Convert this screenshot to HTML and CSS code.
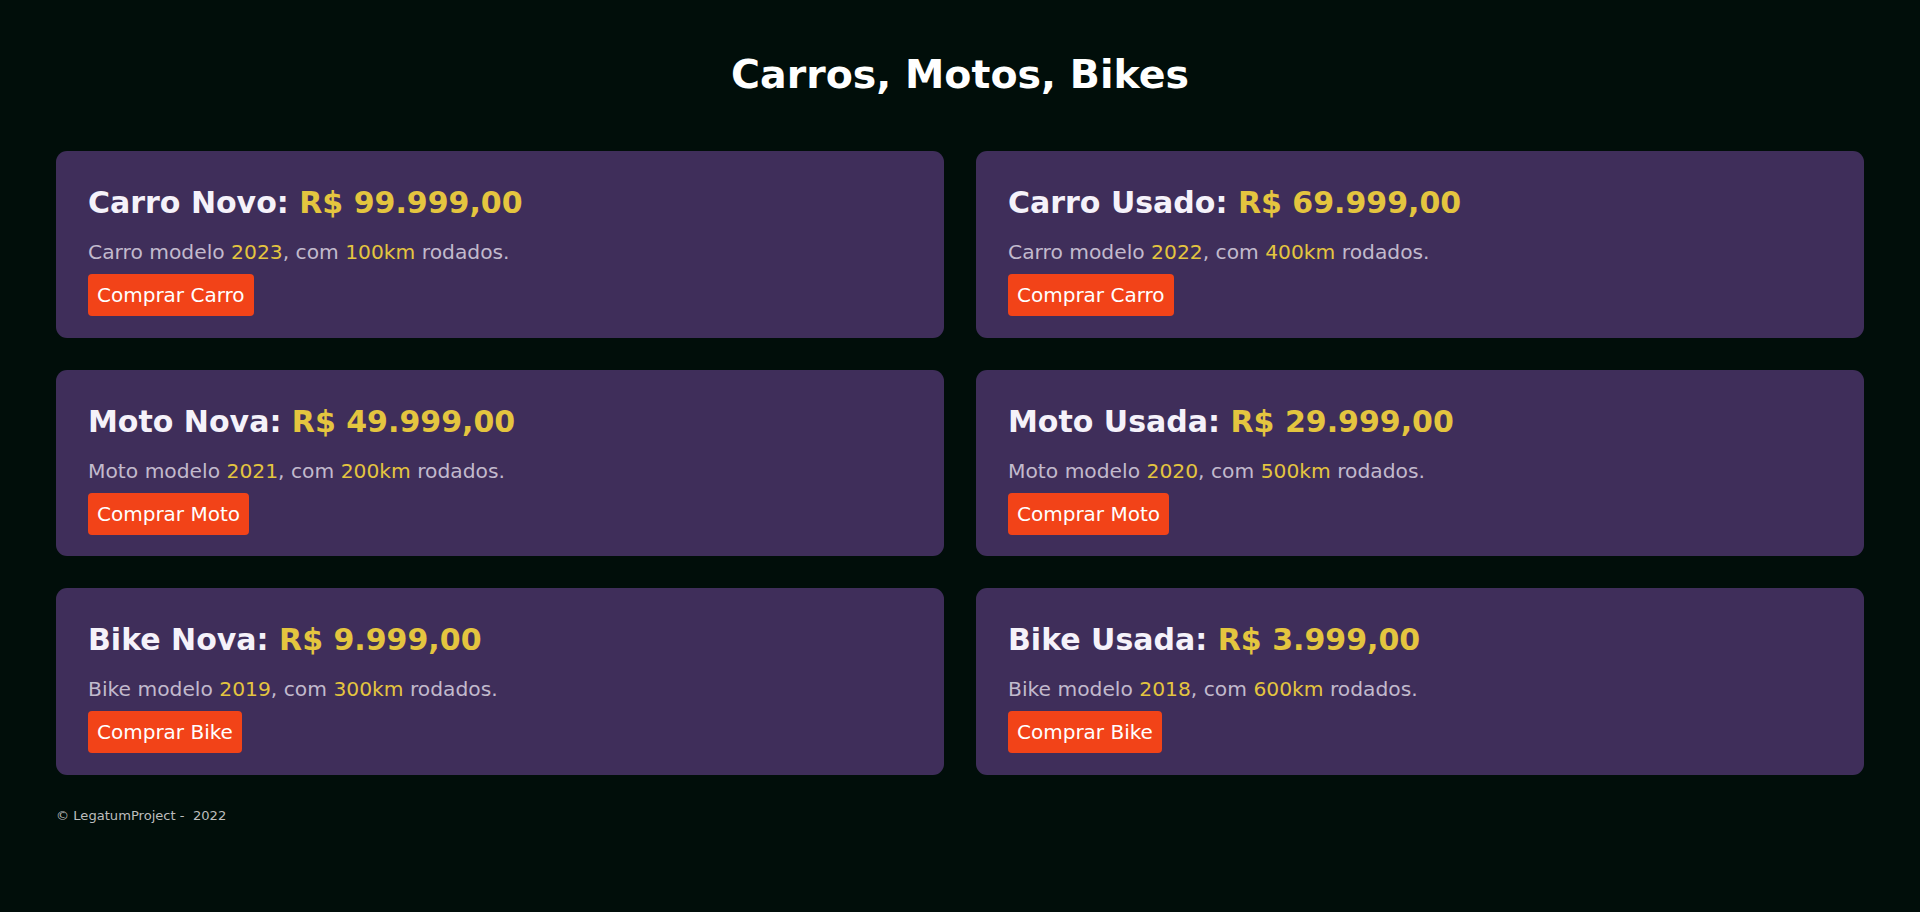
FILE: index.html
```html
<!DOCTYPE html>
<html lang="pt-BR">
<head>
<meta charset="utf-8">
<title>Carros, Motos, Bikes</title>
<link rel="stylesheet" href="styles.css">
</head>
<body>
<h1 class="page-title">Carros, Motos, Bikes</h1>
<main class="grid">
  <section class="card">
    <h2 class="card-title">Carro Novo: <span class="hl">R$ 99.999,00</span></h2>
    <p class="card-text">Carro modelo <span class="hl">2023</span>, com <span class="hl">100km</span> rodados.</p>
    <button class="buy">Comprar Carro</button>
  </section>
  <section class="card">
    <h2 class="card-title">Carro Usado: <span class="hl">R$ 69.999,00</span></h2>
    <p class="card-text">Carro modelo <span class="hl">2022</span>, com <span class="hl">400km</span> rodados.</p>
    <button class="buy">Comprar Carro</button>
  </section>
  <section class="card">
    <h2 class="card-title">Moto Nova: <span class="hl">R$ 49.999,00</span></h2>
    <p class="card-text">Moto modelo <span class="hl">2021</span>, com <span class="hl">200km</span> rodados.</p>
    <button class="buy">Comprar Moto</button>
  </section>
  <section class="card">
    <h2 class="card-title">Moto Usada: <span class="hl">R$ 29.999,00</span></h2>
    <p class="card-text">Moto modelo <span class="hl">2020</span>, com <span class="hl">500km</span> rodados.</p>
    <button class="buy">Comprar Moto</button>
  </section>
  <section class="card">
    <h2 class="card-title">Bike Nova: <span class="hl">R$ 9.999,00</span></h2>
    <p class="card-text">Bike modelo <span class="hl">2019</span>, com <span class="hl">300km</span> rodados.</p>
    <button class="buy">Comprar Bike</button>
  </section>
  <section class="card">
    <h2 class="card-title">Bike Usada: <span class="hl">R$ 3.999,00</span></h2>
    <p class="card-text">Bike modelo <span class="hl">2018</span>, com <span class="hl">600km</span> rodados.</p>
    <button class="buy">Comprar Bike</button>
  </section>
</main>
<footer class="footer">© LegatumProject -&nbsp; 2022</footer>
</body>
</html>
```
FILE: styles.css
```css
html, body {
  margin: 0;
  padding: 0;
}
body {
  background: #010e0a;
  font-family: Verdana, "DejaVu Sans", sans-serif;
  color: #f5f2fa;
  padding: 0 56px;
  min-height: 912px;
  box-sizing: border-box;
}
.page-title {
  margin: 51px 0 54px;
  text-align: center;
  font-size: 39.5px;
  font-weight: bold;
  color: #ffffff;
}
.grid {
  display: grid;
  grid-template-columns: 1fr 1fr;
  column-gap: 32px;
  row-gap: 32px;
}
.card {
  background: #3f2e5a;
  border-radius: 11px;
  padding: 34px 32px 21.5px;
}
.card-title {
  margin: 0 0 20px;
  font-size: 30px;
  font-weight: bold;
  color: #f5f2fa;
}
.hl {
  color: #e4c53f;
}
.card-text {
  margin: 0 0 10px;
  font-size: 20.25px;
  color: #c2bacd;
}
.buy {
  display: block;
  font-family: inherit;
  font-size: 20px;
  color: #ffffff;
  background: #f24318;
  border: none;
  border-radius: 4px;
  padding: 9px 9px;
  cursor: pointer;
}
.footer {
  margin-top: 33px;
  font-size: 13.1px;
  color: #bdbdbd;
}
```
